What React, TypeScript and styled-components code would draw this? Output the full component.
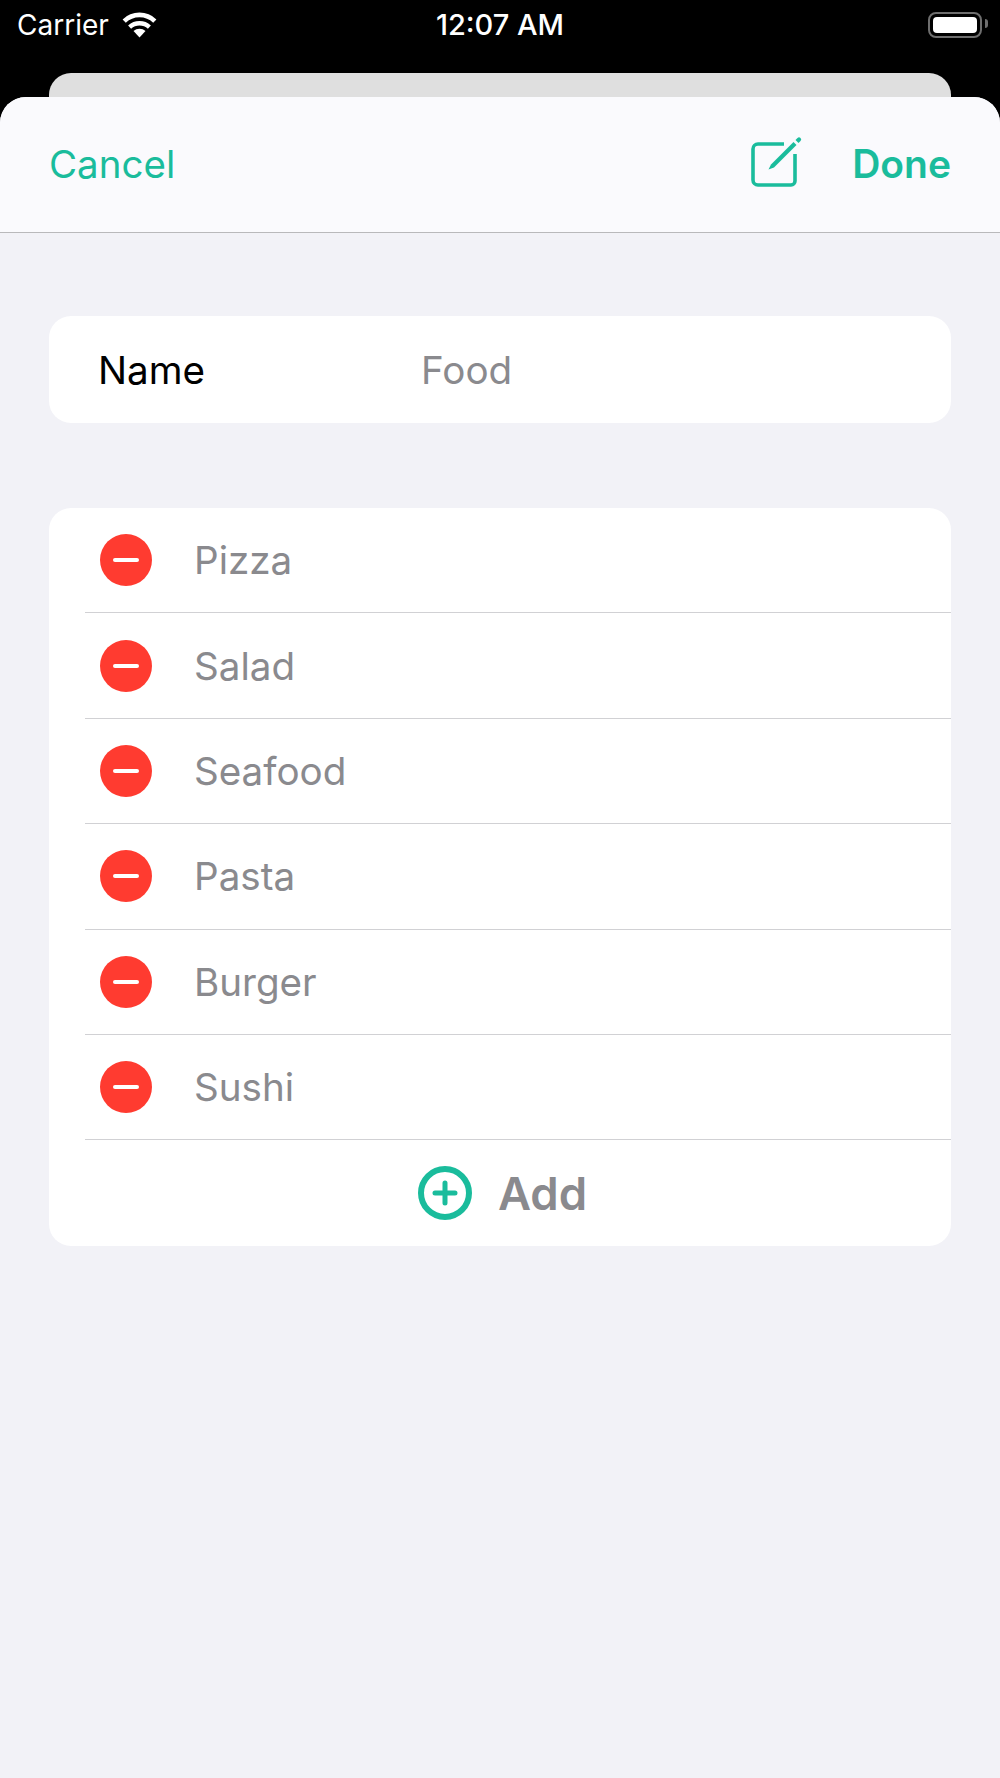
import styled, { createGlobalStyle } from 'styled-components';

const GlobalStyle = createGlobalStyle`
  html, body {
    margin: 0;
    padding: 0;
    background: #000;
  }
`;

const Screen = styled.div`
  width: 1000px;
  height: 1778px;
  display: flex;
  flex-direction: column;
  background: #000;
  font-family: Inter, "Liberation Sans", sans-serif;
  overflow: hidden;
`;

const StatusBar = styled.div`
  height: 50px;
  padding: 0 18px 0 17px;
  display: flex;
  align-items: center;
  color: #fff;
  position: relative;
`;

const Carrier = styled.span`
  font-size: 28px;
  margin-right: 12px;
`;

const Clock = styled.span`
  position: absolute;
  left: 0;
  right: 0;
  text-align: center;
  font-size: 29px;
  font-weight: 500;
  margin-top: -2px;
`;

const Battery = styled.div`
  margin-left: auto;
  width: 54px;
  height: 26px;
  box-sizing: border-box;
  border: 2.5px solid #6e6e6e;
  border-radius: 8px;
  padding: 3px;
  position: relative;

  &::before {
    content: '';
    display: block;
    height: 100%;
    background: #fff;
    border-radius: 4px;
  }

  &::after {
    content: '';
    position: absolute;
    right: -8px;
    top: 5px;
    width: 3px;
    height: 9px;
    background: #6e6e6e;
    border-radius: 0 3px 3px 0;
  }
`;

const BackCard = styled.div`
  height: 24px;
  margin: 23px 49px 0;
  background: #dfdfdf;
  border-radius: 22px 22px 0 0;
`;

const Sheet = styled.div`
  flex: 1;
  display: flex;
  flex-direction: column;
  background: #f2f2f7;
  border-radius: 26px 26px 0 0;
  overflow: hidden;
`;

const NavBar = styled.div`
  height: 136px;
  box-sizing: border-box;
  padding: 0 49px;
  display: flex;
  align-items: center;
  background: #fafafd;
  border-bottom: 1px solid #b9b9bb;
`;

const NavText = styled.span<{ $bold?: boolean }>`
  font-size: ${props => (props.$bold ? 39 : 38.5)}px;
  font-weight: ${props => (props.$bold ? 600 : 400)};
  color: #1abc9c;
  margin-bottom: 2px;
`;

const ComposeIcon = styled.svg`
  margin-left: auto;
  margin-right: 48px;
  margin-bottom: 5px;
  width: 54px;
  height: 54px;
`;

const Content = styled.div`
  display: flex;
  flex-direction: column;
  gap: 85px;
  padding: 83px 49px 0;
`;

const Card = styled.div`
  background: #fff;
  border-radius: 22px;
  overflow: hidden;
`;

const NameRow = styled.div`
  height: 107px;
  display: flex;
  align-items: center;
  padding-left: 49px;
`;

const NameLabel = styled.span`
  width: 323px;
  color: #000;
  font-size: 38.6px;
`;

const Muted = styled.span`
  color: #8a8a8e;
  font-size: 38.6px;
`;

const ItemRow = styled.div`
  height: 105.4px;
  box-sizing: border-box;
  margin-left: 36px;
  display: flex;
  align-items: center;
  gap: 42px;
  padding-left: 15px;
  border-bottom: 1px solid #d1d1d4;
`;

const RemoveBadge = styled.span`
  width: 52px;
  height: 52px;
  border-radius: 50%;
  background: #ff3b30;
  display: flex;
  align-items: center;
  justify-content: center;

  &::after {
    content: '';
    width: 26px;
    height: 4px;
    border-radius: 2px;
    background: #fff;
  }
`;

const AddRow = styled.div`
  height: 106px;
  display: flex;
  align-items: center;
  justify-content: center;
  gap: 26px;
  padding-left: 5px;
`;

const AddLabel = styled.span`
  font-size: 45.5px;
  font-weight: 600;
  color: #8a8a8e;
`;

const items = ['Pizza', 'Salad', 'Seafood', 'Pasta', 'Burger', 'Sushi'];

export default function App() {
  return (
    <Screen>
      <GlobalStyle />
      <StatusBar>
        <Carrier>Carrier</Carrier>
        <svg width="37" height="28" viewBox="0 0 37 27">
          <path d="M18.5 26 L12.5 19.6 A9 9 0 0 1 24.5 19.6 Z" fill="#fff" />
          <path d="M8.6 15.6 A14.6 14.6 0 0 1 28.4 15.6" fill="none" stroke="#fff" strokeWidth="4.4" />
          <path d="M3.2 9.6 A22 22 0 0 1 33.8 9.6" fill="none" stroke="#fff" strokeWidth="4.6" />
        </svg>
        <Clock>12:07 AM</Clock>
        <Battery />
      </StatusBar>
      <BackCard />
      <Sheet>
        <NavBar>
          <NavText>Cancel</NavText>
          <ComposeIcon viewBox="0 0 54 54" fill="none">
            <path d="M34 9 H8 A5 5 0 0 0 3 14 V45 A5 5 0 0 0 8 50 H41 A4 4 0 0 0 45 46 V19" stroke="#1abc9c" strokeWidth="3.6" />
            <path d="M18.5 34.5 L21 29.5 L43.5 7 L46.5 10 L24 32.5 Z" fill="#1abc9c" />
            <path d="M45.5 5 L47.5 3 A2 2 0 0 1 50.5 6 L48.5 8 Z" fill="#1abc9c" />
          </ComposeIcon>
          <NavText $bold>Done</NavText>
        </NavBar>
        <Content>
          <Card>
            <NameRow>
              <NameLabel>Name</NameLabel>
              <Muted>Food</Muted>
            </NameRow>
          </Card>
          <Card>
            {items.map(item => (
              <ItemRow key={item}>
                <RemoveBadge />
                <Muted>{item}</Muted>
              </ItemRow>
            ))}
            <AddRow>
              <svg width="54" height="54" viewBox="0 0 54 54" fill="none">
                <circle cx="27" cy="27" r="24" stroke="#1abc9c" strokeWidth="6" />
                <path d="M27 17 V37 M17 27 H37" stroke="#1abc9c" strokeWidth="5" strokeLinecap="round" />
              </svg>
              <AddLabel>Add</AddLabel>
            </AddRow>
          </Card>
        </Content>
      </Sheet>
    </Screen>
  );
}
